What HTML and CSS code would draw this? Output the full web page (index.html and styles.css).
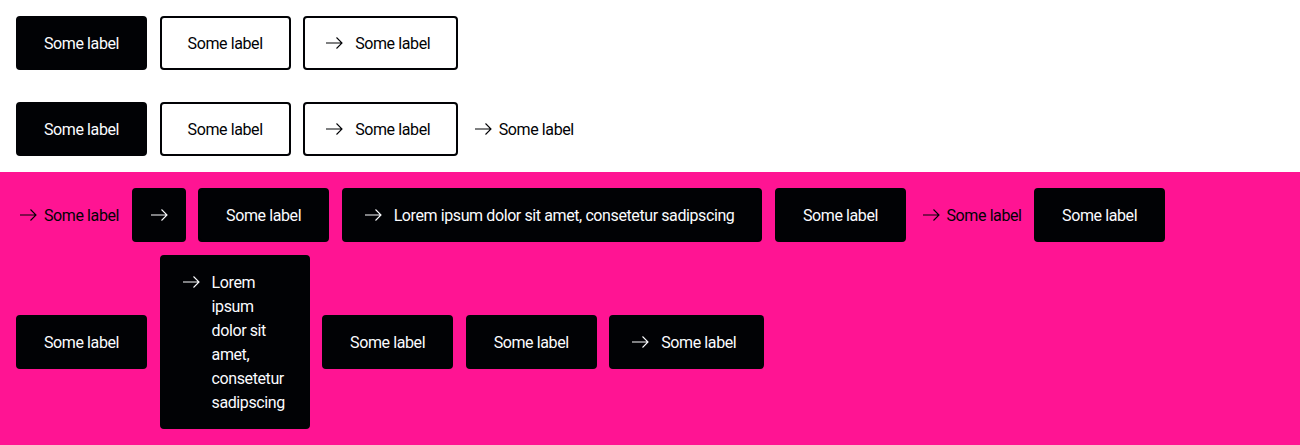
FILE: index.html
```html
<!DOCTYPE html>
<html lang="en">
<head>
<meta charset="utf-8">
<title>Buttons</title>
<link rel="stylesheet" href="styles.css">
</head>
<body>
<section class="theme-light">
  <div class="row">
    <button class="btn btn-primary"><span class="label">Some label</span></button>
    <button class="btn btn-secondary"><span class="label">Some label</span></button>
    <button class="btn btn-secondary btn-icon"><svg class="icon" viewBox="0 0 24 24"><path d="M4 12h15.5M14.5 6.5L20 12l-5.5 5.5"/></svg><span class="label">Some label</span></button>
  </div>
  <div class="row">
    <button class="btn btn-primary"><span class="label">Some label</span></button>
    <button class="btn btn-secondary"><span class="label">Some label</span></button>
    <button class="btn btn-secondary btn-icon"><svg class="icon" viewBox="0 0 24 24"><path d="M4 12h15.5M14.5 6.5L20 12l-5.5 5.5"/></svg><span class="label">Some label</span></button>
    <a class="link"><svg class="icon" viewBox="0 0 24 24"><path d="M4 12h15.5M14.5 6.5L20 12l-5.5 5.5"/></svg><span class="label">Some label</span></a>
  </div>
</section>
<section class="theme-pink">
  <div class="row">
    <a class="link"><svg class="icon" viewBox="0 0 24 24"><path d="M4 12h15.5M14.5 6.5L20 12l-5.5 5.5"/></svg><span class="label">Some label</span></a>
    <button class="btn btn-primary btn-square" aria-label="Some label"><svg class="icon" viewBox="0 0 24 24"><path d="M4 12h15.5M14.5 6.5L20 12l-5.5 5.5"/></svg></button>
    <button class="btn btn-primary"><span class="label">Some label</span></button>
    <button class="btn btn-primary btn-icon"><svg class="icon" viewBox="0 0 24 24"><path d="M4 12h15.5M14.5 6.5L20 12l-5.5 5.5"/></svg><span class="label">Lorem ipsum dolor sit amet, consetetur sadipscing</span></button>
    <button class="btn btn-primary"><span class="label">Some label</span></button>
    <a class="link"><svg class="icon" viewBox="0 0 24 24"><path d="M4 12h15.5M14.5 6.5L20 12l-5.5 5.5"/></svg><span class="label">Some label</span></a>
    <button class="btn btn-primary"><span class="label">Some label</span></button>
  </div>
  <div class="row">
    <button class="btn btn-primary"><span class="label">Some label</span></button>
    <button class="btn btn-primary btn-icon btn-narrow"><svg class="icon" viewBox="0 0 24 24"><path d="M4 12h15.5M14.5 6.5L20 12l-5.5 5.5"/></svg><span class="label">Lorem ipsum dolor sit amet, consetetur sadipscing</span></button>
    <button class="btn btn-primary"><span class="label">Some label</span></button>
    <button class="btn btn-primary"><span class="label">Some label</span></button>
    <button class="btn btn-primary btn-icon"><svg class="icon" viewBox="0 0 24 24"><path d="M4 12h15.5M14.5 6.5L20 12l-5.5 5.5"/></svg><span class="label">Some label</span></button>
  </div>
</section>
</body>
</html>
```
FILE: styles.css
```css
* { box-sizing: border-box; }
html, body { margin: 0; padding: 0; }
body {
  font-family: Roboto, "Liberation Sans", sans-serif;
  font-size: 16px;
  line-height: 24px;
  letter-spacing: -0.4px;
  color: #010205;
  background: #fff;
}
.theme-light {
  padding: 16px;
  display: flex;
  flex-direction: column;
  gap: 32px;
}
.row {
  display: flex;
  align-items: center;
  gap: 12.5px;
}
.theme-pink {
  background: #ff1493;
  padding: 16px;
  display: flex;
  flex-direction: column;
  gap: 13px;
}
.btn {
  display: inline-flex;
  align-items: flex-start;
  gap: 8px;
  margin: 0;
  padding: 14px 26px 12px;
  border: 2px solid #010205;
  border-radius: 4px;
  font: inherit;
  letter-spacing: inherit;
  text-align: left;
  cursor: pointer;
}
.btn-primary { background: #010205; color: #fbfcff; }
.btn-secondary { background: transparent; color: #010205; }
.btn-icon { padding-left: 17px; gap: 9px; }
.btn-icon .icon { margin-top: -1px; }
.btn-square { padding: 13px; }
.btn-narrow { width: 150px; }
.icon {
  width: 24px;
  height: 24px;
  flex: none;
  fill: none;
  stroke: currentColor;
  stroke-width: 1.1;
}
.label { display: block; }
.link {
  display: inline-flex;
  align-items: center;
  gap: 4px;
  padding-top: 2px;
  color: #010205;
  cursor: pointer;
}
.link .icon { margin-top: -2px; }
```
